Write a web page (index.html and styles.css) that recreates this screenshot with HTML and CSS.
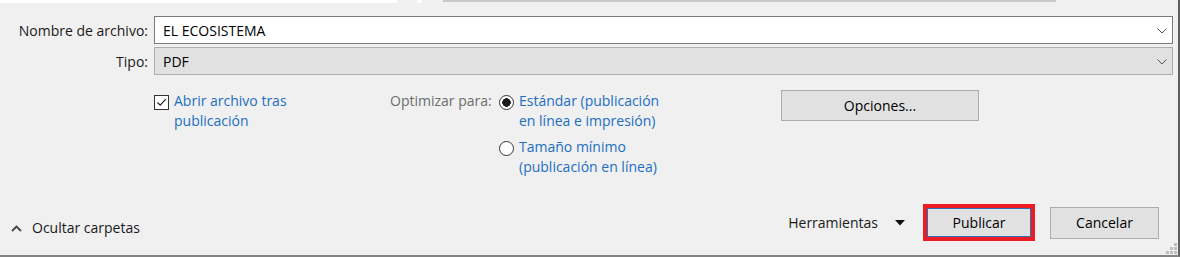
FILE: index.html
```html
<!DOCTYPE html>
<html lang="es">
<head>
    <meta charset="UTF-8">
    <title>Publicar como PDF</title>
    <link rel="stylesheet" href="styles.css">
</head>
<body>
    <div class="dialog">
        <div class="tabs">
            <span class="tab-white wide"></span>
            <span class="tab-gap"></span>
            <span class="tab-white tiny"></span>
            <span class="tab-gap short"></span>
            <span class="tab-bar"></span>
        </div>

        <div class="fields">
            <label class="field-label">Nombre de archivo:</label>
            <div class="combo editable">
                <span>EL ECOSISTEMA</span>
                <svg class="chevron" width="10" height="6" viewBox="0 0 10 6"><path d="M0.5 0.5 L5 5 L9.5 0.5" fill="none" stroke="#555" stroke-width="1"/></svg>
            </div>
            <label class="field-label">Tipo:</label>
            <div class="combo locked">
                <span>PDF</span>
                <svg class="chevron" width="10" height="6" viewBox="0 0 10 6"><path d="M0.5 0.5 L5 5 L9.5 0.5" fill="none" stroke="#555" stroke-width="1"/></svg>
            </div>
        </div>

        <div class="options">
            <div class="open-after">
                <span class="checkbox">
                    <svg width="13" height="13" viewBox="0 0 13 13"><path d="M2.5 6.5 L5.2 9.2 L10.8 3.2" fill="none" stroke="#222" stroke-width="1.2"/></svg>
                </span>
                <span class="link">Abrir archivo tras<br>publicación</span>
            </div>
            <div class="optimize">
                <span class="optimize-label">Optimizar para:</span>
                <div class="radios">
                    <div class="radio-row">
                        <span class="radio on"></span>
                        <span class="link">Estándar (publicación<br>en línea e impresión)</span>
                    </div>
                    <div class="radio-row">
                        <span class="radio"></span>
                        <span class="link">Tamaño mínimo<br>(publicación en línea)</span>
                    </div>
                </div>
            </div>
            <button class="btn options-btn">Opciones...</button>
        </div>

        <div class="footer">
            <div class="folders">
                <svg width="11" height="7" viewBox="0 0 11 7"><path d="M1 6 L5.5 1.5 L10 6" fill="none" stroke="#444" stroke-width="1.8"/></svg>
                <span>Ocultar carpetas</span>
            </div>
            <div class="actions">
                <span class="tools">Herramientas</span>
                <svg class="tools-arrow" width="10" height="6" viewBox="0 0 10 6"><path d="M0 0 H10 L5 5.5 Z" fill="#111"/></svg>
                <span class="highlight"><button class="btn publish">Publicar</button></span>
                <button class="btn cancel">Cancelar</button>
            </div>
        </div>

        <svg class="grip" width="11" height="11" viewBox="0 0 11 11">
            <rect x="8" y="0" width="3" height="3" fill="#bdbdbd"/>
            <rect x="4" y="4" width="3" height="3" fill="#bdbdbd"/>
            <rect x="8" y="4" width="3" height="3" fill="#bdbdbd"/>
            <rect x="0" y="8" width="3" height="3" fill="#bdbdbd"/>
            <rect x="4" y="8" width="3" height="3" fill="#bdbdbd"/>
            <rect x="8" y="8" width="3" height="3" fill="#bdbdbd"/>
        </svg>
    </div>
</body>
</html>
```

FILE: styles.css
```css
body{
    margin: 0;
    font-family: "Open Sans", "Noto Sans", sans-serif;
    font-size: 14px;
    color: #000;
}
.dialog{
    position: relative;
    box-sizing: border-box;
    width: 1180px;
    height: 257px;
    background: #f0f0f0;
    border-right: 2px solid #5f5f5f;
    border-bottom: 2px solid #828282;
    display: flex;
    flex-direction: column;
}
.tabs{
    display: flex;
    height: 3px;
    .tab-white{
        background: #fff;
        height: 3px;
    }
    .wide{ width: 397px; }
    .tiny{ width: 5px; }
    .tab-gap{ width: 20px; }
    .short{ width: 21px; }
    .tab-bar{
        width: 613px;
        height: 2px;
        background: #c9c9c9;
    }
}
.fields{
    margin-top: 13px;
    display: grid;
    grid-template-columns: 148px 1019px;
    column-gap: 6px;
    row-gap: 3px;
    .field-label{
        text-align: right;
        align-self: center;
        white-space: nowrap;
        color: #1a1a1a;
    }
}
.combo{
    box-sizing: border-box;
    height: 28px;
    display: flex;
    align-items: center;
    justify-content: space-between;
    padding: 0 5px 0 8px;
    border: 1px solid #7a7a7a;
    background: #fff;
    .chevron{
        margin-top: 1px;
    }
}
.combo.locked{
    background: #e1e1e1;
    border-color: #adadad;
}
.link{
    color: #1b6ec2;
    line-height: 20px;
    white-space: nowrap;
}
.options{
    margin-top: 16px;
    padding-left: 154px;
    display: flex;
    align-items: flex-start;
    .open-after{
        width: 236px;
        display: flex;
        gap: 5px;
    }
    .checkbox{
        box-sizing: border-box;
        width: 15px;
        height: 15px;
        margin-top: 4px;
        border: 1px solid #333;
        background: #fff;
        display: flex;
        align-items: center;
        justify-content: center;
    }
    .optimize{
        width: 391px;
        display: flex;
        gap: 7px;
    }
    .optimize-label{
        width: 102px;
        line-height: 20px;
        white-space: nowrap;
        color: #6d6d6d;
    }
    .radios{
        display: flex;
        flex-direction: column;
        gap: 6px;
    }
    .radio-row{
        display: flex;
        gap: 5px;
    }
    .radio{
        box-sizing: border-box;
        width: 15px;
        height: 15px;
        margin-top: 4px;
        border: 1px solid #333;
        border-radius: 50%;
        background: #fff;
    }
    .radio.on{
        background: radial-gradient(circle, #1a1a1a 0 4px, #fff 4.5px);
    }
}
.btn{
    box-sizing: border-box;
    font-family: inherit;
    font-size: 14px;
    color: #000;
    background: #e1e1e1;
    border: 1px solid #adadad;
    padding: 0;
}
.options-btn{
    width: 198px;
    height: 31px;
    margin-top: -1px;
}
.footer{
    margin-top: auto;
    padding: 0 19px 14px 11px;
    display: flex;
    justify-content: space-between;
    align-items: center;
    .folders{
        align-self: flex-end;
        margin-bottom: 3px;
        display: flex;
        align-items: center;
        gap: 10px;
        line-height: 20px;
        color: #1a1a1a;
    }
    .actions{
        display: flex;
        align-items: center;
    }
    .tools{
        color: #1a1a1a;
    }
    .tools-arrow{
        margin: 0 18px 0 17px;
    }
    .highlight{
        display: flex;
        border: 4px solid #ec1c24;
    }
    .publish{
        width: 104px;
        height: 29px;
        border-color: #2b6fb5;
    }
    .cancel{
        width: 109px;
        height: 32px;
        margin-left: 15px;
    }
}
.grip{
    position: absolute;
    right: 1px;
    bottom: 1px;
}
```
